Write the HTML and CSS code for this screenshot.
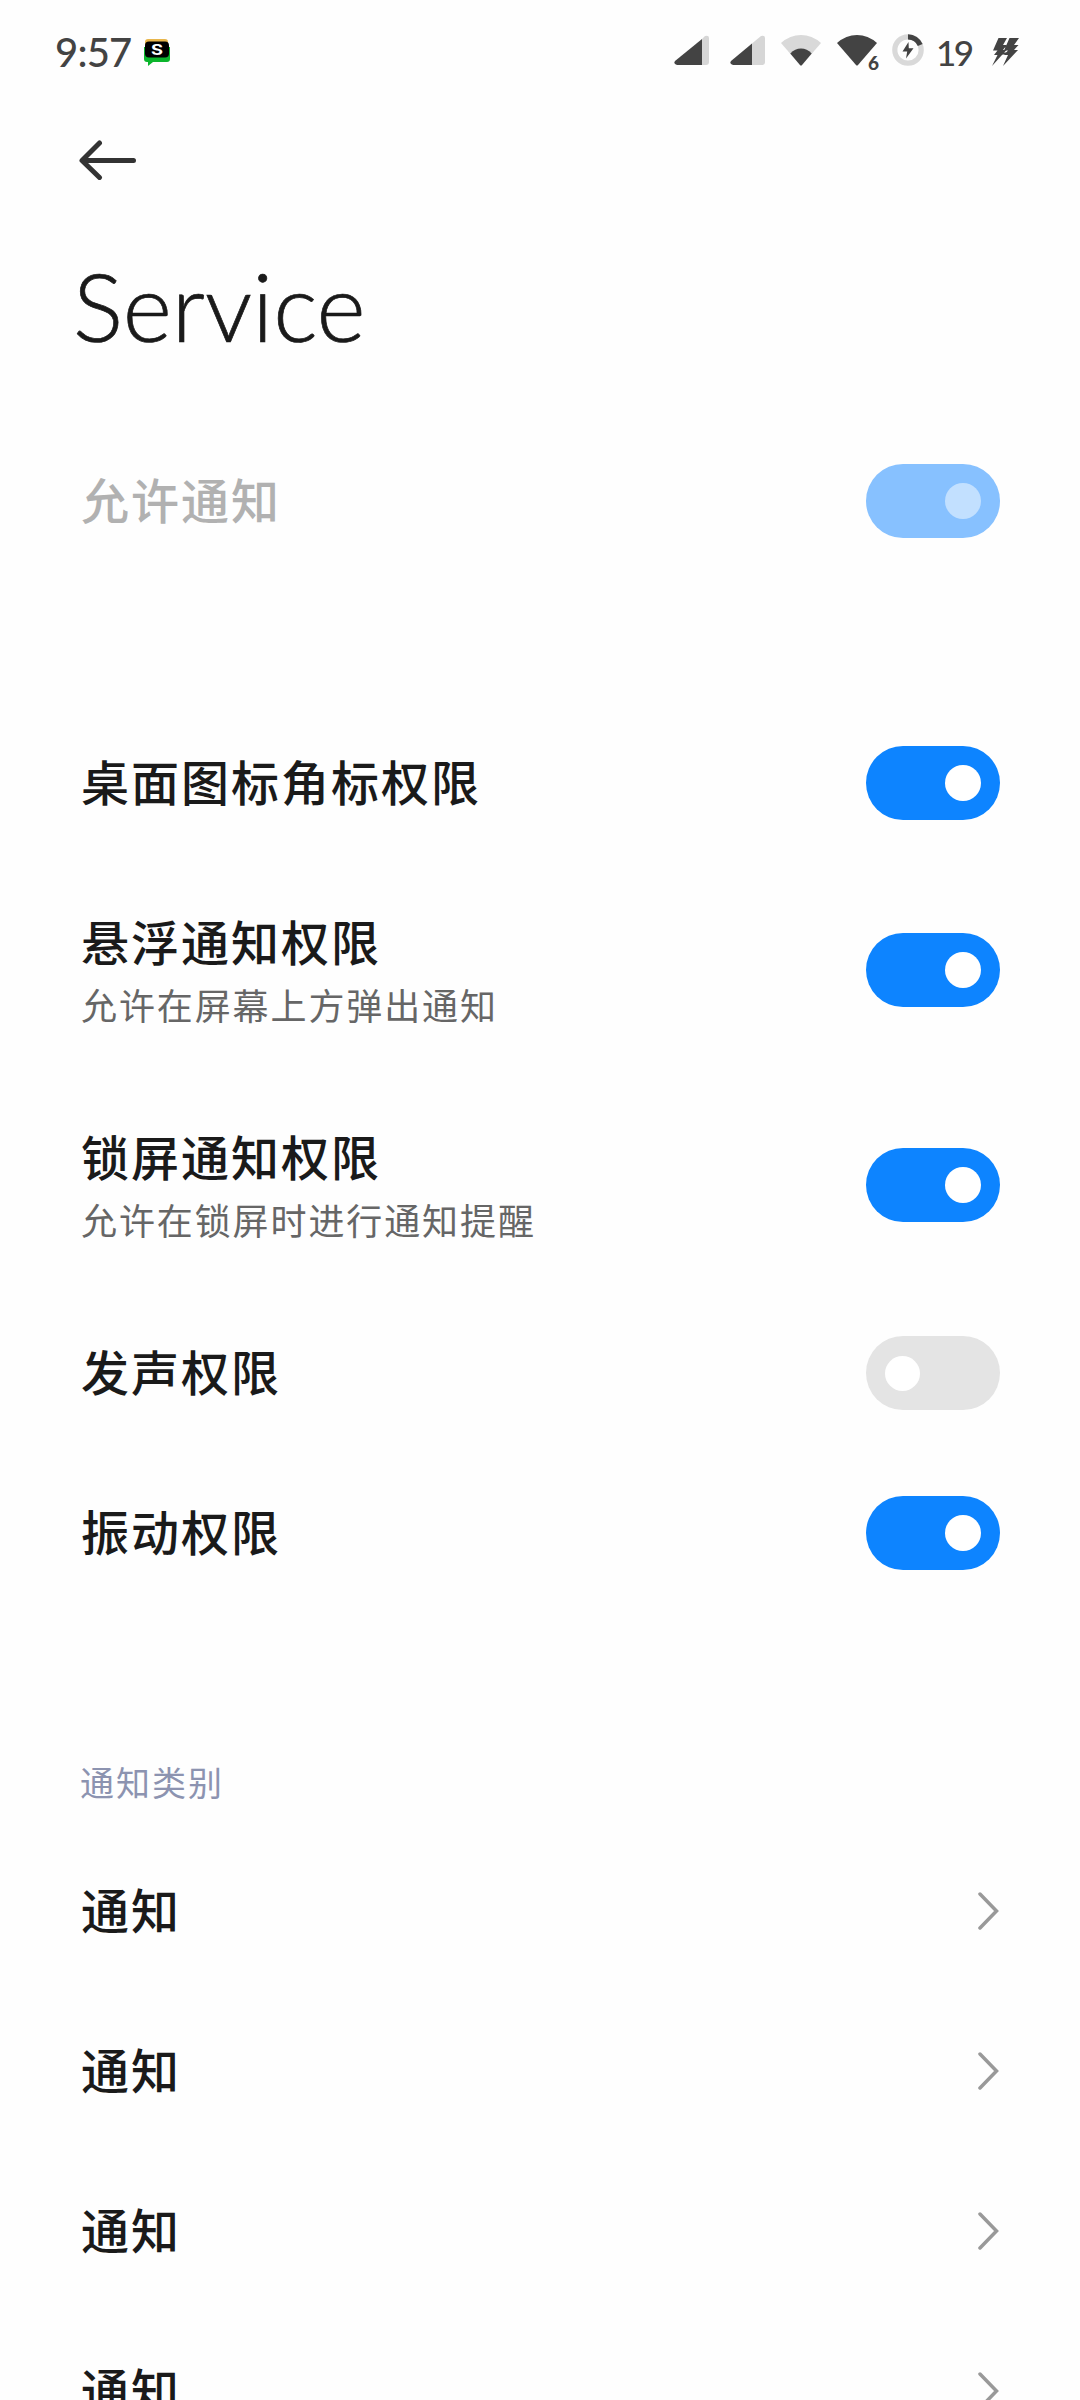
FILE: index.html
```html
<!DOCTYPE html>
<html lang="zh-CN">
<head>
    <meta charset="UTF-8">
    <meta name="viewport" content="width=device-width, initial-scale=1.0">
    <title>Service</title>
    <link rel="stylesheet" href="styles.css">
</head>
<body>
    <div class="status-bar">
        <span class="time">9:57</span>
        <svg class="app-badge" width="28" height="28" viewBox="0 0 28 28">
            <rect x="2" y="0" width="23" height="8" rx="3" fill="#e8b64c"/>
            <path d="M1 8h26v12q0 3-3 3H10l-5 4v-4H4q-3 0-3-3z" fill="#0bb52c"/>
            <rect x="2" y="2.5" width="24" height="16" rx="4" fill="#000"/>
            <text class="badge-letter" x="14" y="15.5" text-anchor="middle" textLength="12" lengthAdjust="spacingAndGlyphs">S</text>
        </svg>
        <div class="status-icons">
            <svg class="signal" width="35" height="30" viewBox="0 0 35 30">
                <path d="M28 4l3-3q4-1 4 2v24q0 3-3 3h-4z" fill="#d6d6d6"/>
                <path d="M28 4v26H3q-4-1-2-4z" fill="#434343"/>
            </svg>
            <svg class="signal second" width="35" height="30" viewBox="0 0 35 30">
                <path d="M22 8.500l9-7.500q4-1 4 2v24q0 3-3 3H22z" fill="#d6d6d6"/>
                <path d="M22 8.500V30H3q-4-1-2-4z" fill="#434343"/>
            </svg>
            <svg class="wifi" width="40" height="31" viewBox="0 0 40 31">
                <path d="M0 8Q9 0 20 0t20 8L21 30q-1 1-2 0z" fill="#d9d9d9"/>
                <path d="M9.300 18.500Q14 13.500 20 13.500t10.700 5L21 30q-1 1-2 0z" fill="#434343"/>
            </svg>
            <svg class="wifi six" width="42" height="40" viewBox="0 0 42 40">
                <path d="M0 8Q9 0 20 0t20 8L21 30q-1 1-2 0z" fill="#434343"/>
                <text class="wifi-six" x="31" y="35">6</text>
            </svg>
            <svg class="charge" width="32" height="32" viewBox="0 0 32 32">
                <circle cx="16" cy="16" r="13.200" fill="none" stroke="#d9d9d9" stroke-width="5.200"/>
                <path d="M16 2.800A13.200 13.200 0 0 1 28.200 11" fill="none" stroke="#434343" stroke-width="5.200"/>
                <path d="M16.500 8L10.500 17.500h4.700L14 24.500l7.500-10.200h-4.700z" fill="#434343"/>
            </svg>
            <span class="battery">19</span>
            <svg class="bolts" width="28" height="28" viewBox="0 0 28 28">
                <path d="M6.500 0H15L11 7h3.500L11 12h3.500L0 28l5.500-11H2l3.500-4.500H1z" fill="#434343"/>
                <path d="M17.500 0H27L22 7h4.500L22 12h4L11 28l5-11h-4l4-4.500h-4z" fill="#434343"/>
                <path d="M10 7.500h8v2h-8zM9 14.500h8v2H9z" fill="#434343"/>
            </svg>
        </div>
    </div>

    <header class="header">
        <svg class="back" width="58" height="40" viewBox="0 0 58 40">
            <path d="M20.500 3L3 20.500L20.500 37.500M3.500 20.500H54.500" fill="none" stroke="#333" stroke-width="5" stroke-linecap="round" stroke-linejoin="round"/>
        </svg>
        <h1>Service</h1>
    </header>

    <main>
        <div class="row disabled">
            <div class="label">允许通知</div>
            <div class="switch on"></div>
        </div>

        <div class="group">
            <div class="row">
                <div class="label">桌面图标角标权限</div>
                <div class="switch on"></div>
            </div>
            <div class="row tall">
                <div class="text">
                    <div class="label">悬浮通知权限</div>
                    <div class="summary">允许在屏幕上方弹出通知</div>
                </div>
                <div class="switch on"></div>
            </div>
            <div class="row tall">
                <div class="text">
                    <div class="label">锁屏通知权限</div>
                    <div class="summary">允许在锁屏时进行通知提醒</div>
                </div>
                <div class="switch on"></div>
            </div>
            <div class="row">
                <div class="label">发声权限</div>
                <div class="switch"></div>
            </div>
            <div class="row">
                <div class="label">振动权限</div>
                <div class="switch on"></div>
            </div>
        </div>

        <h2>通知类别</h2>
        <div class="row">
            <div class="label">通知</div>
            <svg class="arrow" width="22" height="38" viewBox="0 0 22 38"><path d="M2 2L18.500 19L2 36"/></svg>
        </div>
        <div class="row">
            <div class="label">通知</div>
            <svg class="arrow" width="22" height="38" viewBox="0 0 22 38"><path d="M2 2L18.500 19L2 36"/></svg>
        </div>
        <div class="row">
            <div class="label">通知</div>
            <svg class="arrow" width="22" height="38" viewBox="0 0 22 38"><path d="M2 2L18.500 19L2 36"/></svg>
        </div>
        <div class="row">
            <div class="label">通知</div>
            <svg class="arrow" width="22" height="38" viewBox="0 0 22 38"><path d="M2 2L18.500 19L2 36"/></svg>
        </div>
    </main>
</body>
</html>
```
FILE: styles.css
```css
* {
    box-sizing: border-box;
}
body {
    margin: 0;
    width: 1080px;
    height: 2400px;
    overflow: hidden;
    background-color: #fefefe;
    color: #1a1a1a;
    font-family: "Noto Sans CJK SC", sans-serif;
}
svg {
    display: block;
    flex: none;
}

/* status bar */
.status-bar {
    display: flex;
    height: 100px;
    padding: 0 60px 0 55px;
    color: #434343;
    font-family: Lato, sans-serif;
    font-weight: 500;
}
.time {
    width: 88px;
    padding-top: 28px;
    font-size: 40px;
    line-height: 48px;
    letter-spacing: -0.8px;
}
.app-badge {
    margin-top: 39px;
}
.badge-letter {
    fill: #fff;
    font: bold 14px Inter, sans-serif;
}
.status-icons {
    display: flex;
    margin-left: auto;
}
.signal {
    margin: 35px 21px 0 0;
}
.signal.second {
    margin-right: 16px;
}
.wifi {
    margin: 35px 16px 0 0;
}
.wifi.six {
    margin-right: 13px;
}
.wifi-six {
    fill: #434343;
    font: 900 19px Lato, sans-serif;
}
.charge {
    margin: 34px 12px 0 0;
}
.battery {
    width: 56px;
    padding-top: 31px;
    font-size: 35px;
    line-height: 42px;
    letter-spacing: -2.5px;
}
.bolts {
    margin-top: 38px;
}

/* title */
.header {
    height: 321px;
    padding: 40px 0 0 73px;
}
.back {
    margin-left: 6px;
}
h1 {
    margin: 71px 0 0;
    font-family: Lato, sans-serif;
    font-size: 94px;
    font-weight: 300;
    line-height: 110px;
    -webkit-text-stroke: 0.7px #1a1a1a;
}

/* setting rows */
.row {
    display: flex;
    justify-content: space-between;
    align-items: center;
    height: 160px;
    padding: 0 80px 0 81px;
}
.row.tall {
    height: 215px;
    padding-bottom: 1px;
}
.group {
    margin: 122px 0 145px;
}
.label {
    padding-bottom: 6px;
    font-size: 48px;
    font-weight: 500;
    line-height: 64px;
    letter-spacing: 2px;
}
.summary {
    color: #666;
    font-size: 36px;
    line-height: 48px;
    letter-spacing: 1.9px;
}
.tall .label {
    padding-bottom: 8px;
}
.tall .text {
    padding-bottom: 4px;
}
.disabled .label {
    color: #b1b1b1;
}
.switch {
    display: flex;
    align-items: center;
    width: 134px;
    height: 74px;
    padding: 0 19px;
    border-radius: 37px;
    background-color: #e4e4e4;
}
.switch::before {
    content: "";
    width: 35px;
    height: 35px;
    border-radius: 50%;
    background-color: #fff;
}
.switch.on {
    justify-content: flex-end;
    background-color: #0d84ff;
}
.switch.on::before {
    width: 36px;
    height: 36px;
}
.disabled .switch.on {
    background-color: #87c1ff;
}
.disabled .switch::before {
    background-color: #c2e0ff;
}

/* notification categories */
h2 {
    margin: 0 0 25px;
    padding-left: 80px;
    color: #8c93b0;
    font-size: 34px;
    font-weight: 400;
    line-height: 48px;
    letter-spacing: 2px;
}
.arrow path {
    fill: none;
    stroke: #999;
    stroke-width: 3.5;
    stroke-linecap: round;
}
```
